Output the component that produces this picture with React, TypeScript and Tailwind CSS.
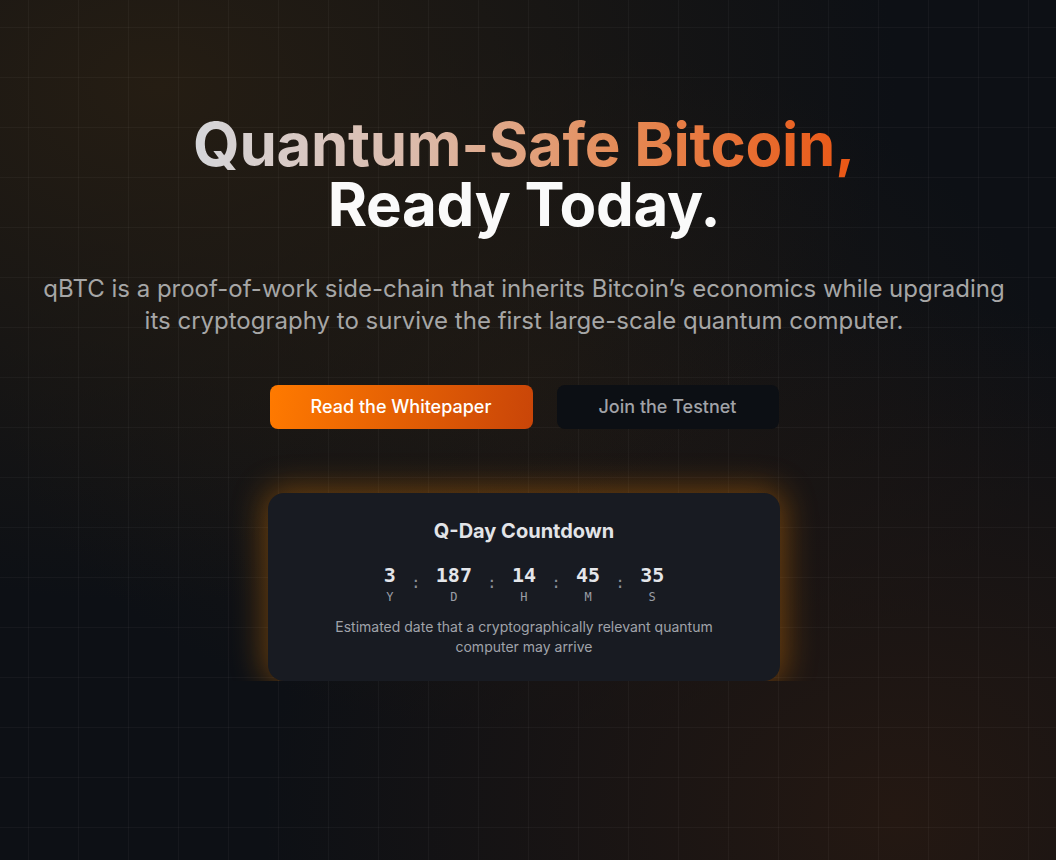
import React from "react";

const units = [
  { value: "3", label: "Y" },
  { value: "187", label: "D" },
  { value: "14", label: "H" },
  { value: "45", label: "M" },
  { value: "35", label: "S" },
];

function Countdown() {
  return (
    <div className="flex items-center justify-center gap-3.5">
      {units.map((u, i) => (
        <React.Fragment key={u.label}>
          {i > 0 && (
            <span className="w-3 text-center font-['DejaVu_Sans_Mono',monospace] text-base text-[#8b8f98]">:</span>
          )}
          <div className="flex flex-col items-center">
            <span className="font-['DejaVu_Sans_Mono',monospace] text-xl font-bold text-[#e4e6ea]">
              {u.value}
            </span>
            <span className="font-['DejaVu_Sans_Mono',monospace] text-xs text-[#9a9ea6]">
              {u.label}
            </span>
          </div>
        </React.Fragment>
      ))}
    </div>
  );
}

export default function App() {
  return (
    <div className="min-h-screen bg-[#0d1015] bg-[radial-gradient(ellipse_70%_60%_at_15%_10%,#251d13,transparent),radial-gradient(ellipse_60%_60%_at_85%_95%,#241812,transparent),radial-gradient(ellipse_50%_40%_at_50%_45%,#1b1714,transparent)] font-['Inter',sans-serif]">
      <div className="min-h-screen bg-[linear-gradient(to_right,rgba(255,255,255,0.035)_1px,transparent_1px),linear-gradient(to_bottom,rgba(255,255,255,0.035)_1px,transparent_1px)] bg-[size:50px_50px] bg-[position:28px_27px]">
        {/* hero */}
        <section className="flex flex-col items-center overflow-hidden pl-2 pr-4 pt-[114px] text-center">
          <h1 className="text-6xl font-bold leading-[60px] tracking-[-0.005em]">
            <span className="bg-[linear-gradient(to_right,#d5d6da_0%,#dcb9a8_35%,#e58a55_65%,#ea5614_100%)] bg-clip-text text-transparent">
              Quantum-Safe Bitcoin,
            </span>
            <br />
            <span className="text-[#fafafa]">Ready Today.</span>
          </h1>

          <p className="mt-[39px] max-w-[980px] text-2xl text-[#a6a6a6]">
            qBTC is a proof-of-work side-chain that inherits Bitcoin’s economics while upgrading
            its cryptography to survive the first large-scale quantum computer.
          </p>

          <div className="mt-12 flex gap-6">
            <button className="h-11 w-[263px] rounded-lg bg-[linear-gradient(100deg,#ff7a00,#c94508)] text-lg font-medium text-white">
              Read the Whitepaper
            </button>
            <button className="h-11 w-[222px] rounded-lg bg-[#0c0f14] text-lg font-medium text-[#a1a3a8]">
              Join the Testnet
            </button>
          </div>

          {/* countdown card */}
          <div className="mt-16 w-full max-w-lg rounded-2xl bg-[#181b22] p-6 shadow-[0_0_32px_4px_rgba(217,119,6,0.45)]">
            <h2 className="mb-4 text-xl font-bold text-[#e2e4e8]">Q-Day Countdown</h2>
            <Countdown />
            <p className="mx-auto mt-3 max-w-[420px] text-sm text-[#a0a3aa]">
              Estimated date that a cryptographically relevant quantum computer may arrive
            </p>
          </div>
        </section>
      </div>
    </div>
  );
}
